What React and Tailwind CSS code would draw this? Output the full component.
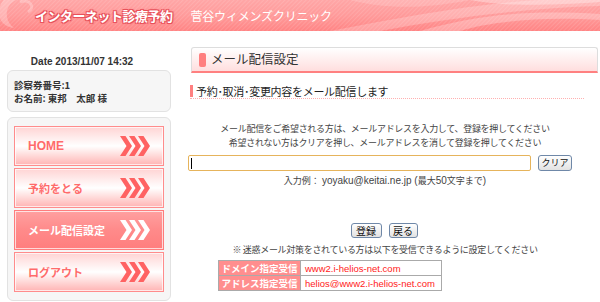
import React from 'react';

const JP = "font-['Noto_Sans_CJK_JP','Liberation_Sans',sans-serif]";

const MENU = [
  { label: 'HOME', active: false, latin: true },
  { label: '予約をとる', active: false },
  { label: 'メール配信設定', active: true },
  { label: 'ログアウト', active: false },
];

function Chevrons({ color }) {
  return (
    <svg width="30" height="20" viewBox="0 0 30 20">
      {[0, 9, 18].map((x) => (
        <polygon
          key={x}
          points={`${x},0 ${x + 5.5},0 ${x + 12},10 ${x + 5.5},20 ${x},20 ${x + 6.5},10`}
          fill={color}
        />
      ))}
    </svg>
  );
}

function HeaderArt() {
  return (
    <svg className="absolute inset-0" width="600" height="31" viewBox="0 0 600 31" preserveAspectRatio="none">
      <defs>
        <pattern id="stripes" width="3" height="3" patternUnits="userSpaceOnUse" patternTransform="rotate(45)">
          <rect width="1" height="3" fill="#ffffff" opacity="0.12" />
        </pattern>
      </defs>
      <rect width="600" height="31" fill="url(#stripes)" />
      <path d="M8 -4 C-6 6 -4 26 14 28 C4 20 4 6 16 0 Z" fill="#ffffff" opacity="0.25" />
      <path d="M20 2 C30 -2 36 8 28 12" stroke="#ffffff" strokeWidth="3" fill="none" opacity="0.25" />
      <path d="M330 31 C400 18 470 4 540 0 L600 0 L600 6 C520 8 440 20 380 31 Z" fill="#ffffff" opacity="0.22" />
      <path d="M420 31 C480 14 530 10 600 14 L600 20 C540 16 490 22 460 31 Z" fill="#ffffff" opacity="0.25" />
      <path d="M470 0 C500 6 540 6 600 2 L600 0 Z" fill="#ffffff" opacity="0.3" />
      <path d="M350 0 C380 8 420 10 470 0 Z" fill="#ffffff" opacity="0.15" />
    </svg>
  );
}

export default function App() {
  return (
    <div className={`w-[600px] h-[302px] overflow-hidden bg-white ${JP}`}>
      <div className="relative h-[31px] bg-gradient-to-b from-[#ffa6a6] via-[#ff9a9a] to-[#ff8484] flex items-center overflow-hidden">
        <HeaderArt />
        <span className="relative ml-[35px] text-white font-bold text-[13px] tracking-[-0.5px] [text-shadow:1px_1px_0_#e8505a,-1px_-1px_0_#e8505a,1px_-1px_0_#e8505a,-1px_1px_0_#e8505a,0_0_3px_#e8505a]">
          インターネット診療予約
        </span>
        <span className="relative ml-[18px] text-white text-[12px] tracking-[-0.2px]">菅谷ウィメンズクリニック</span>
      </div>

      <div className="flex">
        <div className="w-[178px] px-[7px] pt-[24px]">
          <div className="text-center pr-[14px] text-[10px] leading-[14px] font-bold text-[#333] font-['Liberation_Sans',sans-serif]">
            Date 2013/11/07 14:32
          </div>
          <div className="mt-[1px] h-[42px] rounded-[6px] border border-[#e2e2e2] bg-[#f6f6f6] pl-[6px] pt-[8px] text-[9.5px] leading-[13px] font-bold text-[#333]">
            <div className="h-[13px]">診察券番号:1</div>
            <div className="h-[13px]">お名前: 東邦　太郎 様</div>
          </div>
          <div className="mt-[5px] h-[184px] rounded-[6px] border border-[#e2e2e2] bg-[#f6f6f6] px-[6px] pt-[8px] flex flex-col gap-[2px]">
            {MENU.map((m) => (
              <div
                key={m.label}
                className={`h-[40px] border flex items-center justify-between pl-[13px] pr-[13px] shadow-[inset_0_0_0_1px_rgba(255,255,255,0.7)] ${
                  m.active
                    ? 'border-[#ff7c7c] bg-gradient-to-b from-[#ffa0a0] via-[#ff8a8a] to-[#ff7e7e]'
                    : 'border-[#ff8c8c] bg-gradient-to-b from-[#ffd4d4] via-[#ffffff] to-[#ffb4b4]'
                }`}
              >
                <span
                  className={`font-bold text-[11px] ${m.latin ? "font-['Liberation_Sans',sans-serif] text-[12px]" : ''} ${
                    m.active ? 'text-white' : 'text-[#ff6b6b]'
                  }`}
                >
                  {m.label}
                </span>
                <Chevrons color={m.active ? '#ffffff' : '#ff6262'} />
              </div>
            ))}
          </div>
        </div>

        <div className="ml-[10px] w-[410px] pt-[16px]">
          <div className="ml-[3px] h-[26px] rounded-t-[3px] border border-b-0 border-[#dddddd] bg-gradient-to-b from-[#ffffff] to-[#ffdede] border-b-2 border-b-[#ff8080] flex items-center">
            <div className="ml-[7px] w-[7px] h-[14px] rounded-[2px] bg-[#ff7f7f]" />
            <span className="ml-[5px] text-[12.5px] text-[#333]">メール配信設定</span>
          </div>

          <div className="mt-[11px] w-[394px] ml-[2px] border-b border-dotted border-[#ffb0b0] flex items-center h-[15px]">
            <div className="w-[3px] h-[12px] bg-[#ff8080]" />
            <span className="ml-[3px] text-[11px] text-[#222] tracking-[-0.3px]">予約･取消･変更内容をメール配信します</span>
          </div>

          <div className="w-[394px] text-center text-[#444]">
            <div className="mt-[23px] text-[9px] leading-[14px] tracking-[-0.3px]">
              <div>メール配信をご希望される方は、メールアドレスを入力して、登録を押してください</div>
              <div>希望されない方はクリアを押し、メールアドレスを消して登録を押してください</div>
            </div>
            <div className="mt-[5px] flex items-center">
              <div className="w-[343px] h-[16px] border border-[#e6b45c] rounded-[2px] bg-white flex items-center pl-[2px]">
                <div className="w-px h-[11px] bg-black" />
              </div>
              <div className="ml-[7px] w-[34px] h-[16px] border border-[#6f88a8] rounded-[3px] bg-gradient-to-b from-white to-[#e2e2e2] text-[9px] leading-[14px] text-[#111]">
                クリア
              </div>
            </div>
            <div className="mt-[4px] text-[9px] leading-[12px] text-[#444]">
              入力例： <span className="font-['Liberation_Sans',sans-serif] text-[10px]">yoyaku@keitai.ne.jp (</span>最大<span className="font-['Liberation_Sans',sans-serif] text-[10px]">50</span>文字まで<span className="font-['Liberation_Sans',sans-serif] text-[10px]">)</span>
            </div>
            <div className="mt-[36px] flex justify-center gap-[7px] pr-[2px]">
              <div className="w-[31px] h-[15px] border border-[#6f88a8] rounded-[3px] bg-gradient-to-b from-white to-[#e2e2e2] text-[10px] leading-[13px] text-[#111]">登録</div>
              <div className="w-[29px] h-[15px] border border-[#6f88a8] rounded-[3px] bg-gradient-to-b from-white to-[#e2e2e2] text-[10px] leading-[13px] text-[#111]">戻る</div>
            </div>
            <div className="mt-[6px] text-[9px] leading-[12px] tracking-[-0.3px]">
              ※ 迷惑メール対策をされている方は以下を受信できるように設定してください
            </div>
          </div>

          <table className="mt-[4px] ml-[30px] w-[223px] table-fixed border-collapse text-[10px]">
            <colgroup>
              <col className="w-[82px]" />
              <col className="w-[141px]" />
            </colgroup>
            <tbody>
              <tr className="h-[15px]">
                <td className="border border-[#aaaaaa] bg-[#ff8e8e] text-white font-bold text-center text-[9.5px] leading-[13px] p-0 whitespace-nowrap">ドメイン指定受信</td>
                <td className="border border-[#aaaaaa] text-[#ff1a1a] pl-[4px] py-0 text-[9.5px] leading-[13px] whitespace-nowrap font-['Liberation_Sans',sans-serif]">www2.i-helios-net.com</td>
              </tr>
              <tr className="h-[15px]">
                <td className="border border-[#aaaaaa] bg-[#ff8e8e] text-white font-bold text-center text-[9.5px] leading-[13px] p-0 whitespace-nowrap">アドレス指定受信</td>
                <td className="border border-[#aaaaaa] text-[#ff1a1a] pl-[4px] py-0 text-[9.5px] leading-[13px] whitespace-nowrap font-['Liberation_Sans',sans-serif]">helios@www2.i-helios-net.com</td>
              </tr>
            </tbody>
          </table>
        </div>
      </div>
    </div>
  );
}
